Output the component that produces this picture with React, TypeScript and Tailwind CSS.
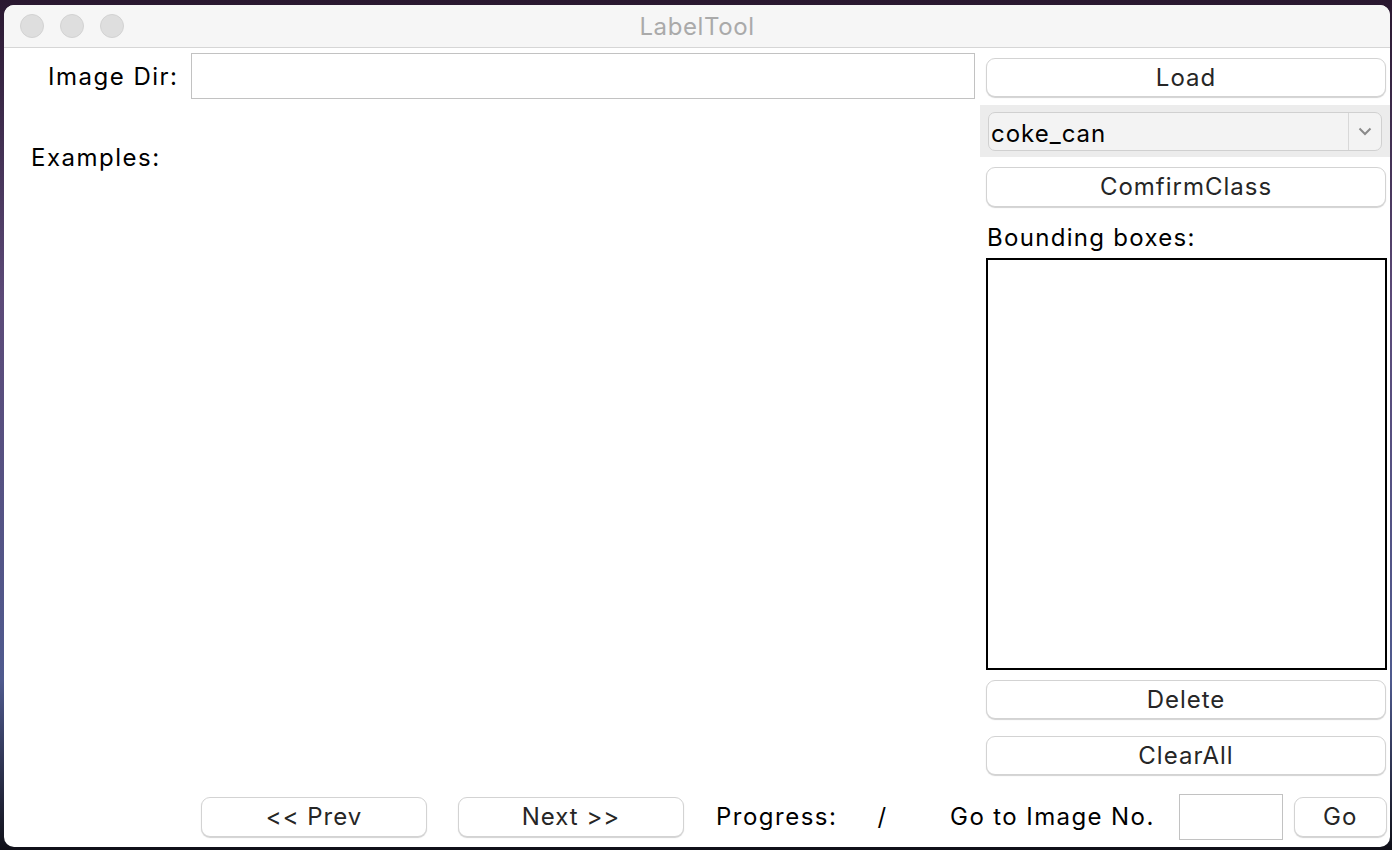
import React from "react";

const font = { fontFamily: "Inter, 'Noto Sans', sans-serif" };

function MacButton({ label, className = "" }: { label: string; className?: string }) {
  return (
    <button
      className={`flex items-center justify-center rounded-[9px] border border-[#d3d3d3] bg-white text-[24px] text-[#262626] shadow-[0_1px_1px_rgba(0,0,0,0.18)] tracking-[1px] ${className}`}
    >
      {label}
    </button>
  );
}

export default function App() {
  return (
    <div
      className="h-[850px] w-[1392px] overflow-hidden bg-[linear-gradient(180deg,#2a1830_0%,#5c4a78_35%,#4f5a8e_80%,#101018_100%)] pl-[4px] pt-[5px]"
      style={font}
    >
      <div className="flex h-[842px] w-[1386px] flex-col overflow-hidden rounded-[10px] bg-white">
        {/* title bar */}
        <div className="relative flex h-[43px] shrink-0 items-center border-b border-[#d6d6d6] bg-[#f6f6f6]">
          <div className="flex gap-[16px] pl-[16px]">
            <span className="h-[24px] w-[24px] rounded-full border border-[#d2d2d2] bg-[#dedede]" />
            <span className="h-[24px] w-[24px] rounded-full border border-[#d2d2d2] bg-[#dedede]" />
            <span className="h-[24px] w-[24px] rounded-full border border-[#d2d2d2] bg-[#dedede]" />
          </div>
          <div className="absolute inset-0 flex items-center justify-center pt-[1px] text-[24px] tracking-[0.6px] text-[#aaaaaa]">
            LabelTool
          </div>
        </div>

        {/* body */}
        <div className="flex flex-1 flex-col">
          <div className="flex">
            {/* left */}
            <div className="flex w-[976px] flex-col">
              <div className="mt-[5px] flex items-center">
                <span className="ml-[44px] w-[143px] pt-[2px] text-[24px] tracking-[1.5px] text-black">Image Dir:</span>
                <div className="h-[46px] w-[784px] border border-[#c2c2c2] bg-white" />
              </div>
              <div className="ml-[27px] mt-[41px] text-[24px] tracking-[1.5px] text-black">Examples:</div>
            </div>

            {/* right */}
            <div className="flex w-[410px] flex-col">
              <MacButton label="Load" className="ml-[6px] mt-[10px] h-[39px] w-[400px]" />
              <div className="mt-[8px] flex h-[52px] items-center bg-[#ececec] pl-[8px]">
                <div className="flex h-[39px] w-[394px] items-center rounded-[7px] border border-[#d0d0d0] bg-[#f3f3f3]">
                  <span className="flex-1 pl-[2px] pt-[6px] text-[24px] tracking-[1px] text-black">coke_can</span>
                  <div className="flex h-full w-[33px] items-center justify-center border-l border-[#d8d8d8]">
                    <svg width="14" height="9" viewBox="0 0 14 9">
                      <path d="M1.5 1.5 L7 7 L12.5 1.5" fill="none" stroke="#8a8a8a" strokeWidth="2" />
                    </svg>
                  </div>
                </div>
              </div>
              <MacButton label="ComfirmClass" className="ml-[6px] mt-[10px] h-[40px] w-[400px]" />
              <div className="ml-[7px] mt-[13px] text-[24px] tracking-[1.3px] text-black">Bounding boxes:</div>
              <div className="ml-[6px] mt-[2px] h-[412px] w-[401px] border-2 border-black bg-white" />
              <MacButton label="Delete" className="ml-[6px] mt-[10px] h-[39px] w-[400px]" />
              <MacButton label="ClearAll" className="ml-[6px] mt-[17px] h-[39px] w-[400px]" />
            </div>
          </div>

          {/* bottom row */}
          <div className="mt-[19px] flex items-center">
            <MacButton label="<< Prev" className="ml-[197px] h-[40px] w-[226px]" />
            <MacButton label="Next >>" className="ml-[31px] h-[40px] w-[226px]" />
            <span className="ml-[32px] text-[24px] tracking-[1.5px] text-black">Progress:</span>
            <span className="ml-[40px] text-[24px] text-black">/</span>
            <span className="ml-[64px] text-[24px] tracking-[1.4px] text-black">Go to Image No.</span>
            <div className="ml-[24px] h-[46px] w-[104px] border border-[#c2c2c2] bg-white" />
            <MacButton label="Go" className="ml-[11px] h-[40px] w-[93px]" />
          </div>
        </div>
      </div>
    </div>
  );
}
